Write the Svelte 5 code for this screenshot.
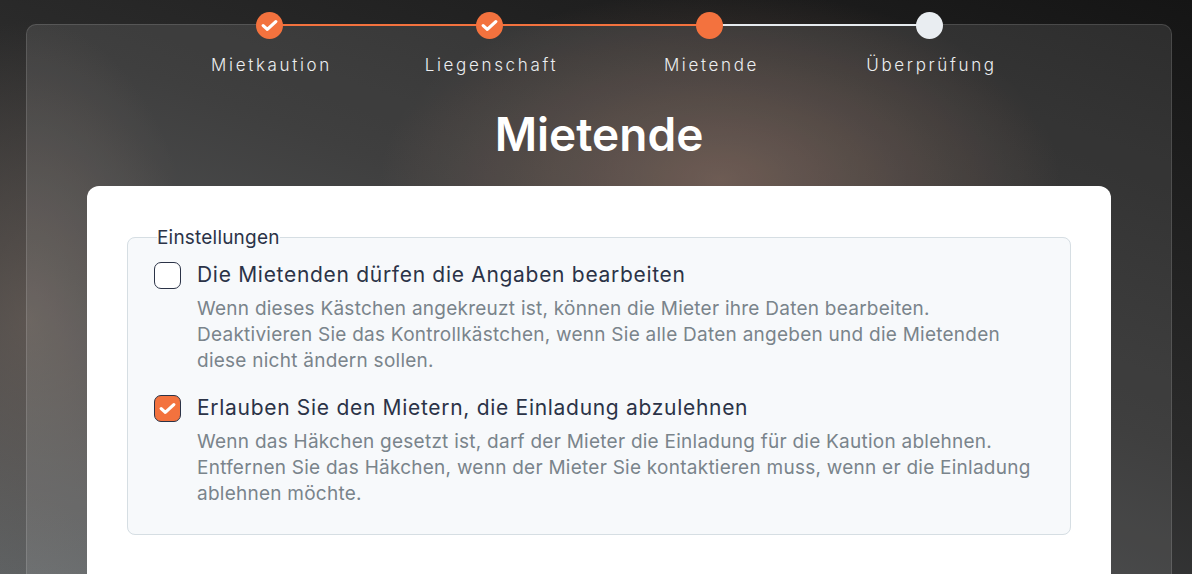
<script>
  const steps = [
    { label: 'Mietkaution', state: 'done' },
    { label: 'Liegenschaft', state: 'done' },
    { label: 'Mietende', state: 'current' },
    { label: 'Überprüfung', state: 'todo' },
  ];

  const options = [
    {
      title: 'Die Mietenden dürfen die Angaben bearbeiten',
      text: [
        'Wenn dieses Kästchen angekreuzt ist, können die Mieter ihre Daten bearbeiten.',
        'Deaktivieren Sie das Kontrollkästchen, wenn Sie alle Daten angeben und die Mietenden',
        'diese nicht ändern sollen.',
      ],
      checked: false,
    },
    {
      title: 'Erlauben Sie den Mietern, die Einladung abzulehnen',
      text: [
        'Wenn das Häkchen gesetzt ist, darf der Mieter die Einladung für die Kaution ablehnen.',
        'Entfernen Sie das Häkchen, wenn der Mieter Sie kontaktieren muss, wenn er die Einladung',
        'ablehnen möchte.',
      ],
      checked: true,
    },
  ];
</script>

<div class="page">
  <main class="panel">
    <ol class="stepper">
      {#each steps as step, i}
        <li class="step {step.state}">
          {#if i < steps.length - 1}
            <span class="line {step.state === 'done' ? 'line-done' : ''}"></span>
          {/if}
          <span class="dot">
            {#if step.state === 'done'}
              <svg width="17" height="13" viewBox="0 0 17 13" fill="none">
                <path d="M2.2 6.6 6.3 10.4 14.8 2.6" stroke="#fff" stroke-width="3.2" stroke-linecap="round" stroke-linejoin="round" />
              </svg>
            {/if}
          </span>
          <span class="step-label">{step.label}</span>
        </li>
      {/each}
    </ol>

    <h1>Mietende</h1>

    <section class="card">
      <fieldset>
        <legend>Einstellungen</legend>
        {#each options as opt}
          <div class="option">
            <span class="box" class:checked={opt.checked}>
              {#if opt.checked}
                <svg width="17" height="13" viewBox="0 0 17 13" fill="none">
                  <path d="M2.2 6.6 6.3 10.4 14.8 2.6" stroke="#fff" stroke-width="3.2" stroke-linecap="round" stroke-linejoin="round" />
                </svg>
              {/if}
            </span>
            <div class="option-body">
              <div class="option-title">{opt.title}</div>
              <p>
                {#each opt.text as line}
                  <span class="line-text">{line}</span>
                {/each}
              </p>
            </div>
          </div>
        {/each}
      </fieldset>
    </section>
  </main>
</div>

<style>
  :global(body) {
    margin: 0;
    background: #1c1c1c;
  }
  .page {
    height: 574px;
    overflow: hidden;
    padding: 24px 20px 0 26px;
    box-sizing: border-box;
    font-family: Inter, 'Open Sans', sans-serif;
    background:
      radial-gradient(ellipse 340px 190px at 720px 180px, rgba(128, 96, 82, 0.62), rgba(128, 96, 82, 0) 100%),
      radial-gradient(ellipse 170px 300px at 30px 320px, rgba(120, 104, 94, 0.5), rgba(120, 104, 94, 0) 100%),
      linear-gradient(20deg, #5d6163 0%, #3a3b3c 32%, #2a2a2a 55%, #151515 100%);
  }
  .panel {
    height: 600px;
    box-sizing: border-box;
    border: 1px solid rgba(255, 255, 255, 0.13);
    border-radius: 10px;
    background: rgba(255, 255, 255, 0.1);
    padding: 0 60px;
  }
  .stepper {
    list-style: none;
    display: flex;
    margin: -13px 0 0;
    padding: 0 0 0 72px;
  }
  .step {
    position: relative;
    width: 220px;
    display: flex;
    flex-direction: column;
    align-items: center;
  }
  .line {
    position: absolute;
    left: 50%;
    top: 12px;
    width: 220px;
    height: 2px;
    background: #e6ebef;
  }
  .line-done {
    background: #f3723e;
  }
  .dot {
    position: relative;
    width: 27px;
    height: 27px;
    border-radius: 50%;
    background: #f3723e;
    display: flex;
    align-items: center;
    justify-content: center;
  }
  .todo .dot {
    background: #e9edf1;
  }
  .step-label {
    margin-top: 14px;
    margin-left: 5px;
    font-size: 17px;
    font-weight: 300;
    line-height: 24px;
    letter-spacing: 2.65px;
    color: #eceef0;
    white-space: nowrap;
  }
  h1 {
    margin: 29px 0 24px;
    text-align: center;
    font-size: 46px;
    line-height: 56px;
    font-weight: 600;
    color: #fff;
  }
  .card {
    background: #fff;
    border-radius: 12px;
    padding: 39px 40px 0;
    height: 500px;
  }
  fieldset {
    margin: 0;
    padding: 13px 26px 27px;
    border: 1px solid #d6dee3;
    border-radius: 8px;
    background: #f7f9fb;
    height: 310px;
    box-sizing: border-box;
  }
  legend {
    margin-left: 3px;
    padding: 2px 0 0;
    font-size: 19px;
    line-height: 22px;
    letter-spacing: 0.2px;
    color: #2b3347;
  }
  .option {
    display: flex;
    gap: 16px;
    margin-bottom: 21px;
  }
  .box {
    flex: none;
    width: 27px;
    height: 27px;
    box-sizing: border-box;
    border: 1px solid #2b3347;
    border-radius: 7px;
    background: #fff;
    display: flex;
    align-items: center;
    justify-content: center;
  }
  .box.checked {
    background: #f3723e;
  }
  .option-title {
    font-size: 21px;
    line-height: 26px;
    letter-spacing: 0.7px;
    color: #2b3347;
    white-space: nowrap;
  }
  p {
    margin: 8px 0 0;
    font-size: 19px;
    line-height: 26px;
    letter-spacing: 0.25px;
    color: #7a848b;
  }
  .line-text {
    display: block;
    white-space: nowrap;
  }
</style>
